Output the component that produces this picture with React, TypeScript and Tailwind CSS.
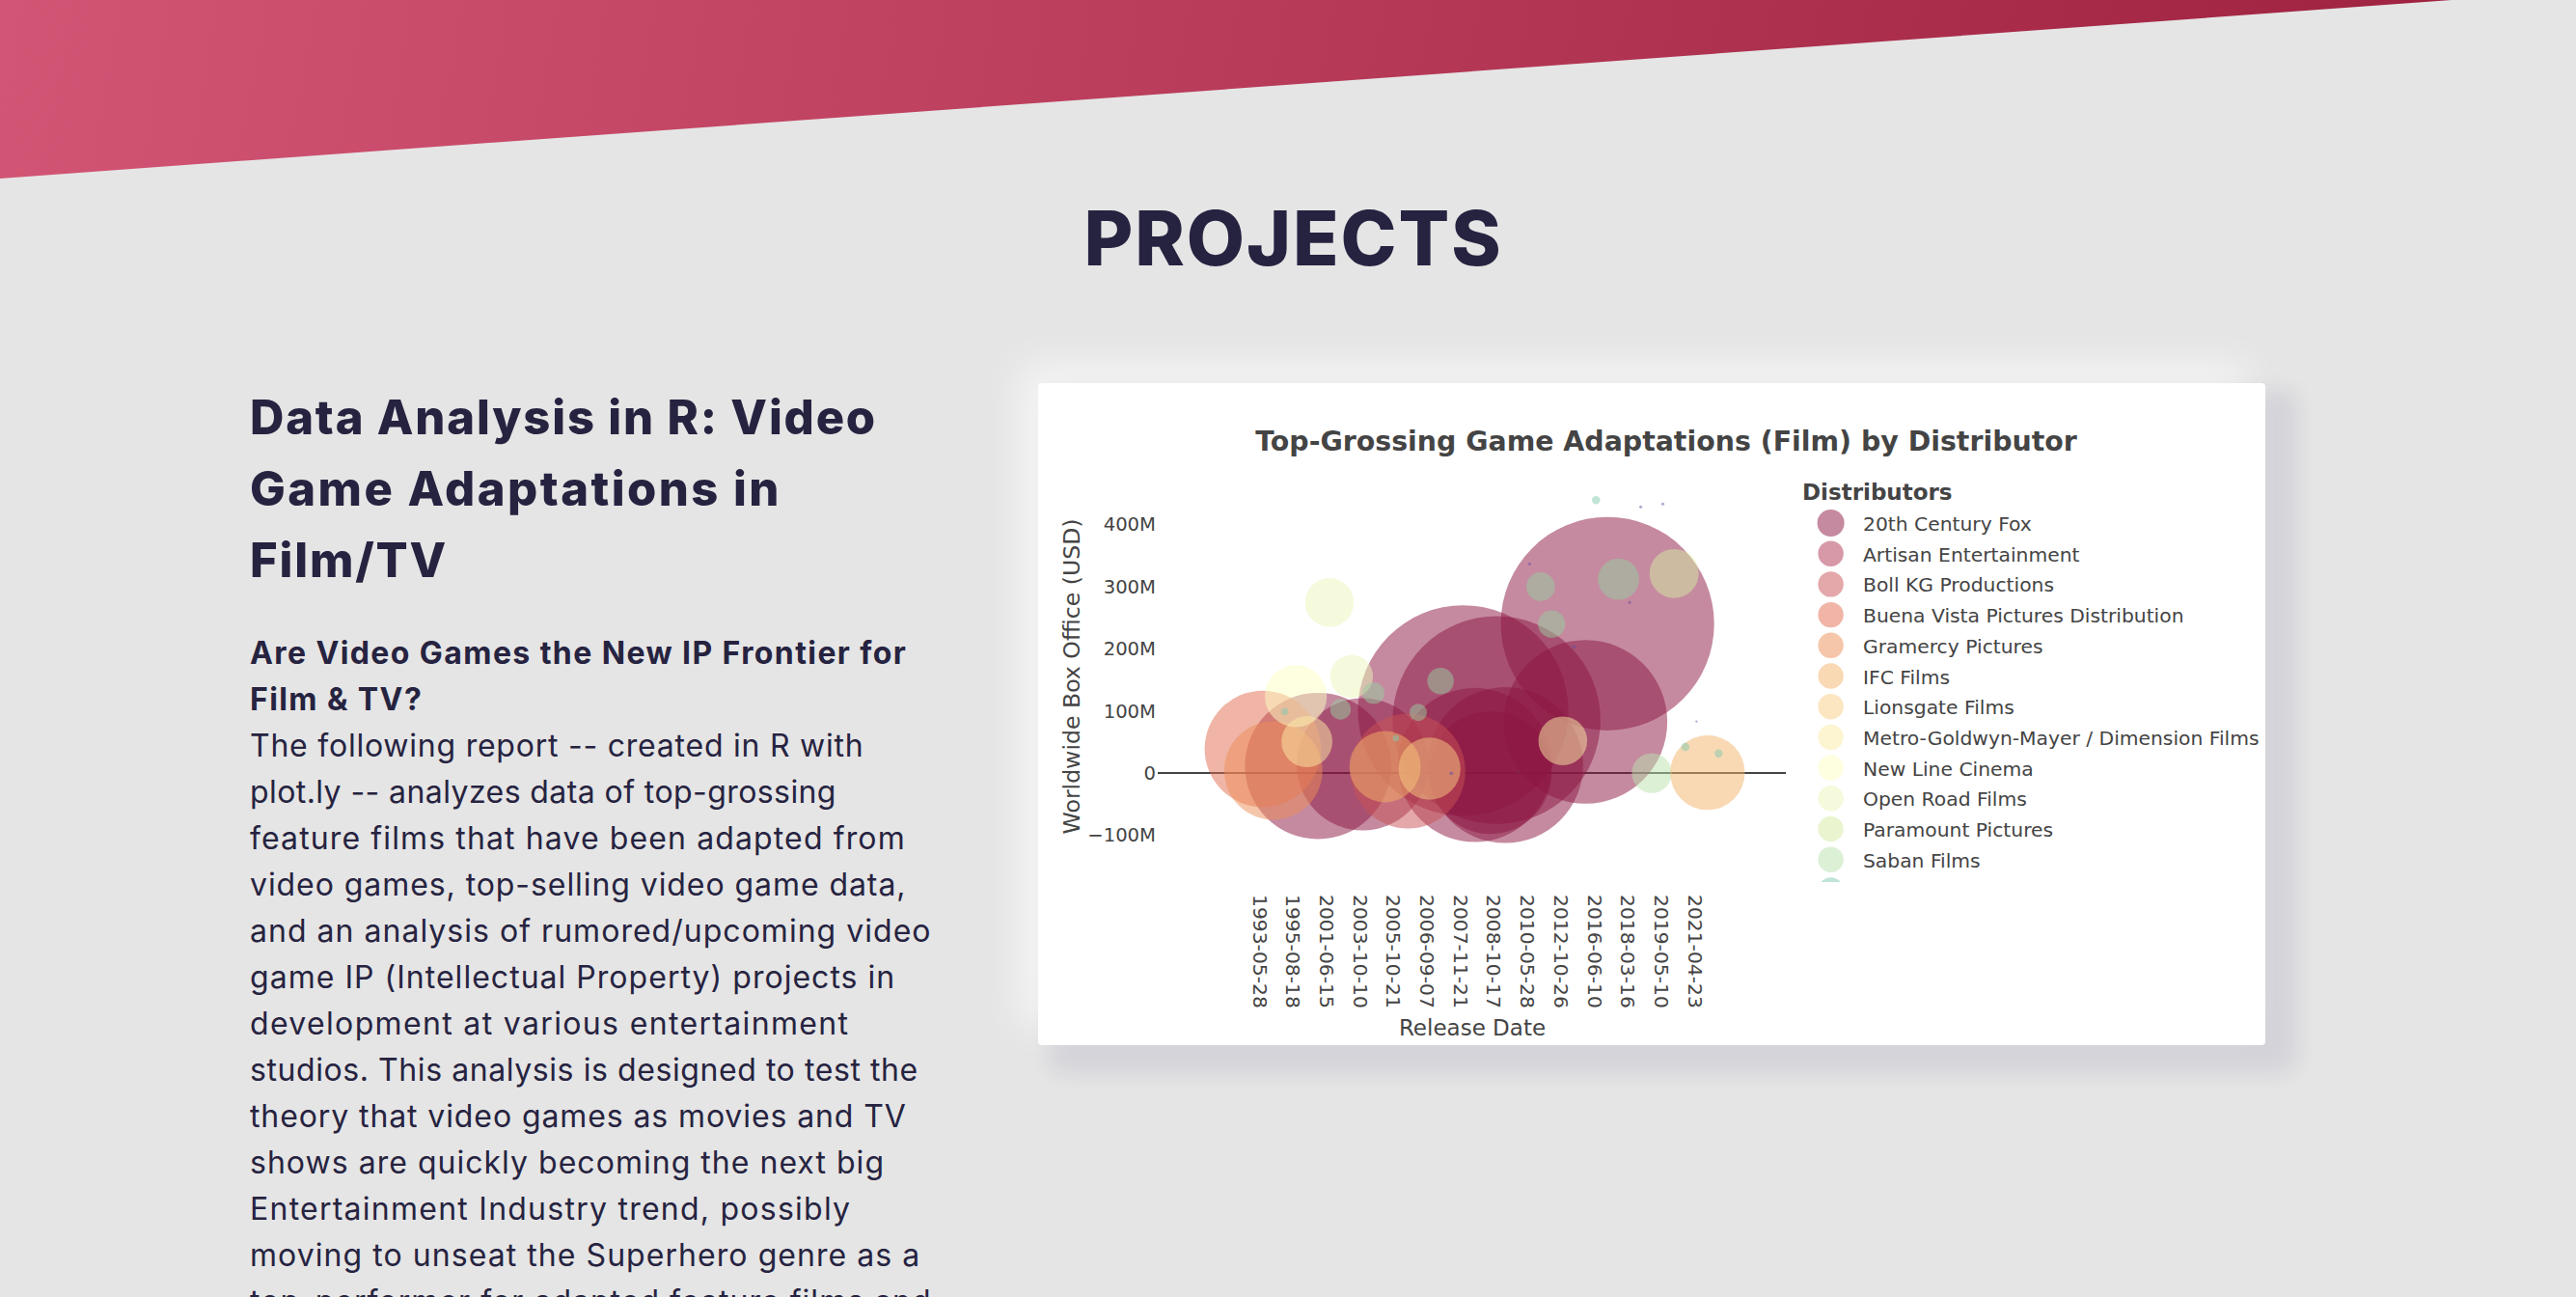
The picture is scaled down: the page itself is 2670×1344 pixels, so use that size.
import React from "react";

const C = {
  fox: "#8b1541", artisan: "#af3351", boll: "#c95155", buena: "#e16b4d", gram: "#ed8d57", ifc: "#f3b369",
  lion: "#f9cd83", mgm: "#fbeba5", line: "#fdffc1", open: "#e9f5b7", para: "#d5eba1", saban: "#b9e1ad", sage: "#97cca0", teal: "#81c9ab", purple: "#5e4fa2",
};

// x0, x1, y0, y1 measured from the picture
const bubbles: [number, number, number, number, string][] = [
  [929, 1507, 167, 831, C.fox], [542, 1112, 441, 1097, C.fox], [636, 1199, 475, 1122, C.fox], [937, 1380, 550, 1058, C.fox],
  [650, 1067, 695, 1181, C.fox], [730, 1152, 702, 1175, C.fox], [236, 632, 714, 1168, C.fox], [376, 734, 730, 1142, C.fox],
  [735, 1067, 752, 1172, C.fox], [522, 833, 778, 1136, C.boll], [127, 442, 708, 1068, C.buena], [180, 446, 803, 1108, C.gram],
  [290, 458, 628, 820, C.line], [335, 473, 786, 945, C.mgm], [399, 531, 357, 509, C.open], [467, 583, 596, 730, C.open],
  [555, 614, 681, 748, C.sage], [467, 523, 734, 796, C.sage], [730, 802, 636, 718, C.sage], [682, 729, 748, 801, C.sage],
  [998, 1076, 339, 429, C.sage], [1192, 1304, 296, 425, C.sage], [1332, 1465, 266, 420, C.para], [1030, 1104, 459, 541, C.sage],
  [1031, 1163, 788, 938, C.mgm], [519, 712, 833, 1054, C.ifc], [652, 820, 853, 1046, C.lion], [1284, 1392, 901, 1026, C.saban],
  [1388, 1590, 845, 1079, C.ifc], [1176, 1198, 102, 128, C.teal], [334, 354, 760, 784, C.teal], [636, 654, 844, 866, C.teal],
  [1418, 1440, 869, 895, C.teal], [1508, 1530, 889, 915, C.teal], [1304, 1312, 132, 140, C.purple], [1364, 1372, 123, 131, C.purple],
  [1003, 1011, 308, 318, C.purple], [1274, 1282, 431, 435, C.purple], [1122, 1132, 566, 576, C.purple], [1456, 1462, 801, 805, C.purple],
  [790, 800, 958, 970, C.purple], [975, 979, 960, 964, C.purple],
];

const legend: [string, string][] = [
  ["20th Century Fox", C.fox], ["Artisan Entertainment", C.artisan], ["Boll KG Productions", C.boll], ["Buena Vista Pictures Distribution", C.buena],
  ["Gramercy Pictures", C.gram], ["IFC Films", C.ifc], ["Lionsgate Films", C.lion], ["Metro-Goldwyn-Mayer / Dimension Films", C.mgm],
  ["New Line Cinema", C.line], ["Open Road Films", C.open], ["Paramount Pictures", C.para], ["Saban Films", C.saban],
];

const dates = ["1993-05-28", "1995-08-18", "2001-06-15", "2003-10-10", "2005-10-21", "2006-09-07", "2007-11-21", "2008-10-17", "2010-05-28", "2012-10-26", "2016-06-10", "2018-03-16", "2019-05-10", "2021-04-23"];
const ticks: [string, number][] = [["400M", 550], ["300M", 614.5], ["200M", 679], ["100M", 743.5], ["0", 808], ["−100M", 872]];

function Chart() {
  return (
    <svg viewBox="1076 397 1272 686" className="block h-full w-full" style={{ fontFamily: '"DejaVu Sans", sans-serif' }} fill="#444444">
      <defs>
        <clipPath id="legendClip"><rect x="1860" y="500" width="490" height="414" /></clipPath>
      </defs>
      <text x="1727" y="467" textAnchor="middle" fontSize="28.4" fontWeight="700">Top-Grossing Game Adaptations (Film) by Distributor</text>
      <text transform="translate(1111 701) rotate(-90)" textAnchor="middle" fontSize="23.6" dominantBaseline="central">Worldwide Box Office (USD)</text>
      {ticks.map(([t, y]) => (
        <text key={t} x="1198" y={y} textAnchor="end" fontSize="19.6">{t}</text>
      ))}
      <line x1="1200" x2="1851" y1="801" y2="801" stroke="#444444" strokeWidth="2" />
      {bubbles.map(([x0, x1, y0, y1, c], i) => (
        <circle key={i} cx={1200 + (x0 + x1) / 2 / 2.613} cy={480 + (y0 + y1) / 2 / 3} r={(x1 - x0) / 2 / 2.613} fill={c} opacity={0.5} />
      ))}
      {dates.map((d, i) => (
        <text key={d} transform={`translate(${1298.5 + i * 34.7} 927) rotate(90)`} fontSize="20.3">{d}</text>
      ))}
      <text x="1526" y="1073" textAnchor="middle" fontSize="23">Release Date</text>
      <text x="1868" y="518" fontSize="23" fontWeight="700">Distributors</text>
      <g clipPath="url(#legendClip)">
        {legend.map(([t, c], i) => (
          <g key={t}>
            <circle cx="1897.6" cy={542 + i * 31.7} r={i === 0 ? 14 : 13.2} fill={c} opacity={0.5} />
            <text x="1931" y={550 + i * 31.7} fontSize="20.3">{t}</text>
          </g>
        ))}
        <circle cx="1897.6" cy={542 + 12 * 31.7} r="13.2" fill={C.teal} opacity={0.5} />
      </g>
    </svg>
  );
}

const body: [string, string][] = [
  ["The following report -- created in R with", "tracking-[0.024em]"],
  ["plot.ly -- analyzes data of top-grossing", "tracking-[0.013em]"],
  ["feature films that have been adapted from", "tracking-[0.035em]"],
  ["video games, top-selling video game data,", "tracking-[0.029em]"],
  ["and an analysis of rumored/upcoming video", "tracking-[0.032em]"],
  ["game IP (Intellectual Property) projects in", "tracking-[0.032em]"],
  ["development at various entertainment", "tracking-[0.042em]"],
  ["studios. This analysis is designed to test the", "tracking-[0.018em]"],
  ["theory that video games as movies and TV", "tracking-[0.028em]"],
  ["shows are quickly becoming the next big", "tracking-[0.032em]"],
  ["Entertainment Industry trend, possibly", "tracking-[0.039em]"],
  ["moving to unseat the Superhero genre as a", "tracking-[0.033em]"],
  ["top-performer for adapted feature films and", "tracking-[0.032em]"],
];

export default function App() {
  return (
    <div className="h-[1344px] w-[2670px] overflow-hidden bg-[#e5e5e5] font-['Inter','Liberation_Sans',sans-serif] text-[#262340]">
      <div className="h-[185px] w-full bg-[linear-gradient(100deg,#d35575_0%,#9f2240_95%)] [clip-path:polygon(0_0,2541px_0,0_100%)]" />
      <h1 className="mt-[14px] pl-[11px] text-center text-[78px] leading-[96px] font-extrabold tracking-[0.025em]">PROJECTS</h1>
      <div className="mt-[102px] flex items-start pl-[259px]">
        <div className="w-[817px] shrink-0 whitespace-nowrap">
          <h2 className="-mt-[1px] text-[49px] leading-[74px] font-extrabold tracking-[0.037em]">
            <span className="block">Data Analysis in R: Video</span>
            <span className="block tracking-[0.05em]">Game Adaptations in</span>
            <span className="block">Film/TV</span>
          </h2>
          <p className="mt-[35px] text-[32px] leading-[48px] font-bold tracking-[0.044em]">
            <span className="block">Are Video Games the New IP Frontier for</span>
            <span className="block">Film &amp; TV?</span>
          </p>
          <p className="text-[32px] leading-[48px] font-normal">
            {body.map(([l, t]) => (
              <span key={l} className={`block ${t}`}>{l}</span>
            ))}
          </p>
        </div>
        <div className="h-[686px] w-[1272px] shrink-0 overflow-hidden rounded-[4px] bg-white shadow-[22px_18px_22px_10px_rgba(35,30,100,0.09),-20px_-20px_40px_rgba(255,255,255,0.6)]">
          <Chart />
        </div>
      </div>
    </div>
  );
}
